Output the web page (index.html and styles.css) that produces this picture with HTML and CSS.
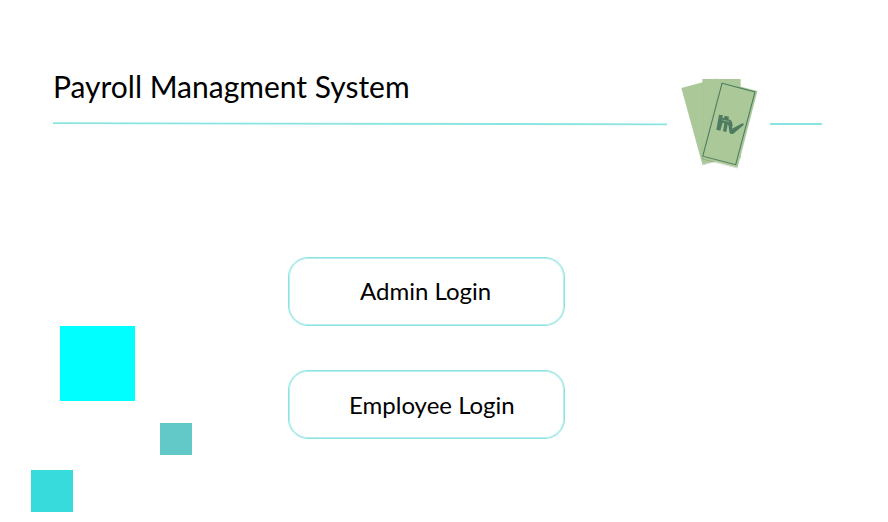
FILE: index.html
```html
<!DOCTYPE html>
<html lang="en">
<head>
<meta charset="utf-8">
<title>Payroll Managment System</title>
<link rel="stylesheet" href="styles.css">
</head>
<body>
<header class="header">
  <div class="heading">
    <h1 class="title"><span>Payroll Managment System</span></h1>
    <svg class="rule" width="614" height="4" viewBox="0 0 614 4" aria-hidden="true"><path d="M0 1.2L614 2.3" stroke="#8ae4e2" stroke-width="1.8"/></svg>
  </div>
  <svg class="notes" width="103" height="105" viewBox="667 70 103 105" aria-hidden="true">
    <defs><filter id="shadow" x="-20%" y="-20%" width="140%" height="140%"><feDropShadow dx="0" dy=".6" stdDeviation=".7" flood-color="#000" flood-opacity=".25"/></filter></defs>
    <path filter="url(#shadow)" d="M681.5 88L717 78.5L738 155L702.5 164.5Z" fill="#abc998"/>
    <path filter="url(#shadow)" d="M702.5 79H740.5V158H702.5Z" fill="#abc998"/>
    <path filter="url(#shadow)" d="M721 81.5L757.3 91L737.5 167.5L701 158Z" fill="#abc998"/>
    <path d="M722 83.3L755 92L735.7 164.7L702.8 156.2Z" fill="none" stroke="#4f7c60" stroke-width="1.1"/>
    <path transform="translate(665 70) scale(.33333)" d="M162 134L174 136L172 143L177 144L179 137L192 140L190 148L197 150Q203 156 203 165L201 176L232 160Q238 161 236 165L205 191Q199 194 194 190L192 178Q193 168 188 163L184 186L174 184L178 160L173 158L166 182L154 179Z" fill="#4f7c60"/>
    <path transform="translate(665 70) scale(.33333)" d="M172 150L193 155" stroke="#abc998" stroke-width="1.8"/>
  </svg>
  <div class="rule-end"></div>
</header>
<main class="content">
  <div class="squares" aria-hidden="true">
    <i class="square large"></i>
    <i class="square small"></i>
    <i class="square medium"></i>
  </div>
  <nav class="actions">
    <button class="action admin" type="button"><span>Admin Login</span></button>
    <button class="action employee" type="button"><span>Employee Login</span></button>
  </nav>
</main>
</body>
</html>
```
FILE: styles.css
```css
* { box-sizing: border-box; }
body {
  margin: 0;
  width: 888px;
  height: 522px;
  overflow: hidden;
  background: #fff;
  color: #000;
  font-family: Lato, sans-serif;
}
.header {
  display: flex;
  height: 175px;
  padding: 70px 0 0 53px;
}
.heading { width: 614px; }
.title {
  margin: 0;
  height: 52px;
  font-size: 30px;
  line-height: 33px;
  font-weight: 400;
  white-space: nowrap;
}
.rule { display: block; }
.notes { display: block; }
.rule-end {
  width: 52px;
  height: 2px;
  margin-top: 53px;
  background: #8ae4e2;
}
.content { display: flex; }
.squares {
  display: flex;
  flex-direction: column;
  width: 288px;
  padding-top: 151px;
}
.square { display: block; }
.large { width: 75px; height: 75px; margin-left: 60px; background: #00ffff; }
.small { width: 32px; height: 32px; margin: 22px 0 0 160px; background: #62c9c8; }
.medium { width: 42px; height: 42px; margin: 15px 0 0 31px; background: #37dbdb; }
.actions {
  display: flex;
  flex-direction: column;
  gap: 44px;
  padding-top: 82px;
}
.action {
  width: 277px;
  height: 69px;
  padding: 0 0 2px;
  border: 1px solid #8ae4e2;
  border-radius: 20px;
  box-shadow: inset 0 0 0 1px rgba(138, 228, 226, .6);
  background: #fff;
  color: #000;
  font: 24px/30px Lato, sans-serif;
  text-align: left;
}
.admin { padding-left: 71px; }
.employee { padding: 0 0 0 60px; }
```
